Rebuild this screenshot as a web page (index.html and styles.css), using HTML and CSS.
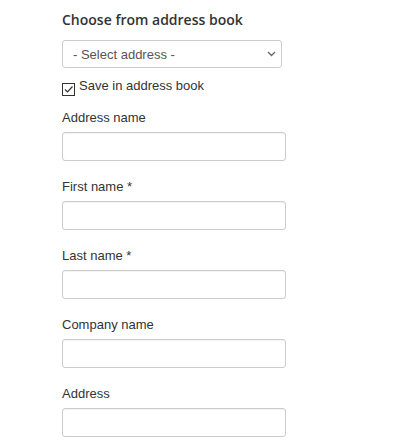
FILE: index.html
```html
<!DOCTYPE html>
<html lang="en">
<head>
    <meta charset="UTF-8">
    <meta name="viewport" content="width=device-width, initial-scale=1.0">
    <title>Address</title>
    <link rel="stylesheet" href="styles.css">
</head>
<body>
    <div class="address-form">
        <h3 class="book-title">Choose from address book</h3>
        <div class="select-wrap">
            <select class="address-select">
                <option>- Select address -</option>
            </select>
            <svg class="chevron" width="9" height="6" viewBox="0 0 9 6"><path d="M1 1l3.5 3.5L8 1" fill="none" stroke="#666" stroke-width="1.3"/></svg>
        </div>
        <label class="save-row">
            <span class="check-box">
                <svg width="11" height="11" viewBox="0 0 11 11"><path d="M2 5.5l2.5 2.5L9.5 2.5" fill="none" stroke="#333" stroke-width="1.2"/></svg>
            </span>
            <span>Save in address book</span>
        </label>

        <div class="field">
            <label>Address name</label>
            <input type="text">
        </div>
        <div class="field">
            <label>First name *</label>
            <input type="text">
        </div>
        <div class="field">
            <label>Last name *</label>
            <input type="text">
        </div>
        <div class="field">
            <label>Company name</label>
            <input type="text">
        </div>
        <div class="field">
            <label>Address</label>
            <input type="text">
        </div>
    </div>
</body>
</html>
```

FILE: styles.css
```css
body {
    margin: 0;
    background-color: #fff;
    font-family: "Liberation Sans", Arial, sans-serif;
    font-size: 13px;
    color: #333;
}

.address-form {
    padding: 10px 0 0 62px;
    width: 224px;
}

.book-title {
    margin: 0 0 10px 0;
    font-family: "Open Sans", sans-serif;
    font-weight: 600;
    font-size: 14px;
    line-height: 20px;
    color: #333;
}

.select-wrap {
    position: relative;
    width: 220px;
}

.address-select {
    display: block;
    width: 220px;
    height: 28px;
    padding: 0 0 0 10px;
    border: 1px solid #ccc;
    border-radius: 3px;
    background-color: #fff;
    font-family: "Liberation Sans", Arial, sans-serif;
    font-size: 13px;
    color: #555;
    appearance: none;
    -webkit-appearance: none;
}

.chevron {
    position: absolute;
    right: 6px;
    top: 11px;
}

.save-row {
    display: flex;
    align-items: flex-start;
    gap: 4px;
    margin-top: 10px;
    line-height: 15px;
}

.check-box {
    width: 11px;
    height: 11px;
    margin-top: 5px;
    border: 1px solid #333;
    display: flex;
    align-items: center;
    justify-content: center;
}

.field {
    margin-top: 17px;
}

.save-row + .field {
    margin-top: 13px;
}

.field label {
    display: block;
    line-height: 18px;
    margin-bottom: 5px;
}

.field input {
    display: block;
    box-sizing: border-box;
    width: 224px;
    height: 29px;
    margin: 0;
    border: 1px solid #ccc;
    border-radius: 3px;
    box-shadow: inset 0 1px 1px rgba(0, 0, 0, 0.05);
}
```
